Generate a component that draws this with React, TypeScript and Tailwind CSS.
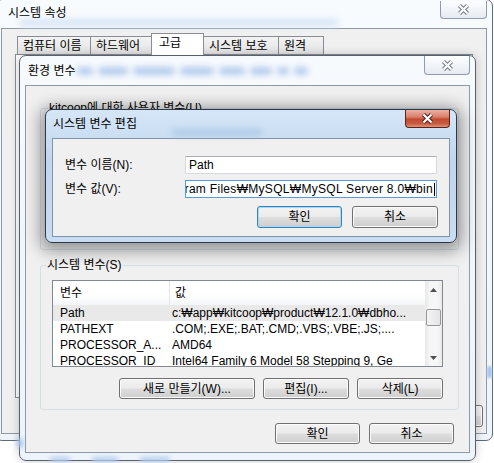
const font = "font-['Liberation_Sans','Noto_Sans_CJK_KR',sans-serif]";

function CloseX({ active }: { active?: boolean }) {
  return (
    <svg width="13" height="11" viewBox="0 0 13 11">
      <path d="M2.5 1.5L10.5 9.5M10.5 1.5L2.5 9.5" stroke={active ? "#47231c" : "#6f7886"} strokeWidth="4.2" />
      <path d="M2.5 1.5L10.5 9.5M10.5 1.5L2.5 9.5" stroke="#ffffff" strokeWidth="2.2" />
    </svg>
  );
}

function Btn({ label, w, isDefault }: { label: string; w: string; isDefault?: boolean }) {
  return (
    <div
      className={`${w} h-full flex items-center justify-center rounded-[3px] border ${
        isDefault
          ? "border-[#3c7fb1] shadow-[inset_0_0_0_1px_#9fdcfb]"
          : "border-[#707070] shadow-[inset_0_0_0_1px_#fbfbfb]"
      } bg-[linear-gradient(180deg,#f2f2f2_0%,#ebebeb_48%,#dddddd_52%,#cfcfcf_100%)]`}
    >
      {label}
    </div>
  );
}

function Arrow({ up }: { up?: boolean }) {
  return (
    <svg width="7" height="4" viewBox="0 0 7 4">
      <path d={up ? "M0 4L3.5 0L7 4Z" : "M0 0L3.5 4L7 0Z"} fill="#4f4f4f" />
    </svg>
  );
}

function BackWindow() {
  const tabs = [
    { label: "컴퓨터 이름", w: "w-[74px]" },
    { label: "하드웨어", w: "w-[62px]" },
    { label: "고급", w: "w-[53px]", active: true },
    { label: "시스템 보호", w: "w-[76px]" },
    { label: "원격", w: "w-[46px]" },
  ];
  return (
    <div className="absolute left-[-5px] top-[-1px] w-[498px] h-[442px] rounded-[7px] border border-[#5f6b78] bg-[linear-gradient(180deg,#f8fbfe,#eef4fa)] flex flex-col px-[5px] pb-[6px]">
      <div className="relative h-[28px] pl-[7px] pt-[6px]">
        <div className="absolute left-[18px] top-[19px] w-[320px] h-[7px] rounded-full bg-[#d6e5f6] blur-[3px]" />
        <span className="relative">시스템 속성</span>
        <div className="absolute right-0 top-[1px] w-[47px] h-[18px] flex items-center justify-center rounded-b-[4px] border border-t-0 border-[#8f9bab] bg-[linear-gradient(180deg,#fdfeff,#e6ebf1)]">
          <CloseX />
        </div>
      </div>
      <div className="flex-1 flex flex-col border border-[#8d99a6] bg-[#f0f0f0] pl-[13px] pt-[4px]">
        <div className="flex items-end h-[22px] pl-[2px]">
          {tabs.map((t) =>
            t.active ? (
              <div
                key={t.label}
                className={`${t.w} relative z-10 -ml-px h-[22px] border border-b-0 border-[#898c95] bg-white pl-[7px] pt-[2px]`}
              >
                {t.label}
              </div>
            ) : (
              <div
                key={t.label}
                className={`${t.w} -ml-px first:ml-0 h-[19px] border border-[#898c95] bg-[linear-gradient(180deg,#f3f3f3,#e3e3e3)] pl-[5px] pt-[2px]`}
              >
                {t.label}
              </div>
            )
          )}
        </div>
        <div className="-mt-px w-[458px] h-[344px] border border-[#898c95] bg-white" />
        <div className="flex justify-end gap-[6px] pr-[3px] mt-[7px] h-[22px]">
          <Btn label="확인" w="w-[75px]" />
          <Btn label="취소" w="w-[75px]" />
          <Btn label="적용(A)" w="w-[75px]" />
        </div>
      </div>
      <div className="absolute right-[0px] top-[366px] w-[5px] h-[12px] rounded-full bg-[#a8c6ec] blur-[1px]" />
    </div>
  );
}

function EnvWindow() {
  const blobs = ["w-[16px]", "w-[30px]", "w-[42px]", "w-[34px]", "w-[26px]", "w-[22px]", "w-[12px]", "w-[14px]"];
  const rows = [
    { name: "Path", value: "c:₩app₩kitcoop₩product₩12.1.0₩dbho...", sel: true },
    { name: "PATHEXT", value: ".COM;.EXE;.BAT;.CMD;.VBS;.VBE;.JS;...." },
    { name: "PROCESSOR_A...", value: "AMD64" },
    { name: "PROCESSOR_ID", value: "Intel64 Family 6 Model 58 Stepping 9, Ge" },
  ];
  return (
    <div className="absolute left-[19px] top-[55px] w-[457px] h-[406px] rounded-[7px] border border-[#58626e] bg-[linear-gradient(180deg,#f7fafd,#edf3fa)] flex flex-col px-[5px] pb-[7px] shadow-[0_0_10px_rgba(0,0,0,0.22)]">
      <div className="relative h-[29px] pl-[3px] pt-[8px]">
        <div className="absolute left-[52px] top-[11px] flex gap-[5px]">
          {blobs.map((b, i) => (
            <div key={i} className={`${b} h-[8px] rounded-full bg-[#b3cbee] blur-[3px]`} />
          ))}
        </div>
        <span className="relative">환경 변수</span>
        <div className="absolute right-0 top-0 w-[46px] h-[19px] flex items-center justify-center rounded-b-[4px] border border-t-0 border-[#8f9bab] bg-[linear-gradient(180deg,#fdfeff,#e6ebf1)]">
          <CloseX />
        </div>
      </div>
      <div className="flex-1 flex flex-col border border-[#8e9aa8] bg-[#f0f0f0] px-[14px] pt-[15px]">
        <fieldset className="w-[419px] h-[149px] rounded-[3px] border border-[#d5dfe5]">
          <legend className="ml-[7px] px-px">kitcoop에 대한 사용자 변수(U)</legend>
        </fieldset>
        <fieldset className="mt-[8px] w-[419px] rounded-[3px] border border-[#d5dfe5] pb-[10px]">
          <legend className="ml-[5px] px-px">시스템 변수(S)</legend>
          <div className="pl-[11px] pt-[8px]">
            <div className="flex w-[391px] h-[87px] border border-[#828790] bg-white">
              <div className="flex-1 flex flex-col overflow-hidden">
                <div className="flex h-[24px] shrink-0 bg-[linear-gradient(180deg,#ffffff_0%,#ffffff_55%,#f4f5f7_100%)]">
                  <div className="w-[117px] flex items-center pl-[7px] border-r border-[#e3e5e8]">변수</div>
                  <div className="flex items-center pl-[5px]">값</div>
                </div>
                {rows.map((r) => (
                  <div
                    key={r.name}
                    className={`flex h-[16px] shrink-0 items-center whitespace-nowrap ${r.sel ? "bg-[#e9e9e9]" : ""}`}
                  >
                    <div className="w-[117px] shrink-0 pl-[7px]">{r.name}</div>
                    <div className="pl-[2px]">{r.value}</div>
                  </div>
                ))}
              </div>
              <div className="w-[17px] flex flex-col bg-[linear-gradient(90deg,#e8e8e8,#f6f6f6_30%,#f6f6f6_70%,#ebebeb)]">
                <div className="h-[17px] flex items-center justify-center">
                  <Arrow up />
                </div>
                <div className="flex-1">
                  <div className="mt-[11px] mx-px h-[17px] rounded-[2px] border border-[#979797] bg-[linear-gradient(90deg,#f4f4f4,#e4e4e4)]" />
                </div>
                <div className="h-[17px] flex items-center justify-center">
                  <Arrow />
                </div>
              </div>
            </div>
            <div className="mt-[11px] flex justify-end gap-[8px] w-[391px] h-[21px]">
              <Btn label="새로 만들기(W)..." w="w-[136px]" />
              <Btn label="편집(I)..." w="w-[86px]" />
              <Btn label="삭제(L)" w="w-[86px]" />
            </div>
          </div>
        </fieldset>
        <div className="mt-[13px] flex justify-end gap-[9px] pr-[1px] h-[21px]">
          <Btn label="확인" w="w-[85px]" />
          <Btn label="취소" w="w-[85px]" />
        </div>
      </div>
      <div className="absolute left-[-3px] top-[382px] w-[6px] h-[10px] rounded-full bg-[#a8c6ec] blur-[2px]" />
      <div className="absolute left-[30px] bottom-[-2px] flex gap-[22px]">
        <div className="w-[20px] h-[5px] rounded-full bg-[#b7cff0] blur-[2px]" />
        <div className="w-[26px] h-[5px] rounded-full bg-[#b7cff0] blur-[2px]" />
        <div className="w-[30px] h-[5px] rounded-full bg-[#b7cff0] blur-[2px]" />
      </div>
    </div>
  );
}

function EditDialog() {
  return (
    <div className="absolute left-[45px] top-[109px] w-[412px] h-[134px] rounded-[7px] border border-[#2b3849] bg-[linear-gradient(180deg,#d5e6f7,#c0d6ee_40%,#c9dcf1)] flex flex-col px-[6px] pb-[5px] shadow-[0_3px_16px_5px_rgba(0,0,0,0.38)]">
      <div className="relative h-[28px] pl-[1px] pt-[7px]">
        <div className="absolute left-[120px] top-[20px] w-[90px] h-[5px] rounded-full bg-[#a9c4e4] blur-[3px]" />
        <span className="relative">시스템 변수 편집</span>
        <div className="absolute right-0 top-0 w-[45px] h-[18px] flex items-center justify-center rounded-b-[4px] border border-t-0 border-[#5e2219] bg-[linear-gradient(180deg,#eab2a4_0%,#d9806b_40%,#c24a31_55%,#c85c3f_80%,#dd9478_100%)]">
          <CloseX active />
        </div>
      </div>
      <div className="flex-1 flex flex-col border border-[#7f93ab] bg-[#f0f0f0] pt-[17px] pl-[12px] pr-[12px]">
        <div className="flex items-center h-[18px]">
          <div className="flex-1">변수 이름(N):</div>
          <div className="w-[252px] h-full flex items-center border border-[#d5d8de] border-t-[#abadb3] bg-white pl-[3px]">
            Path
          </div>
        </div>
        <div className="flex items-center h-[18px] mt-[6px]">
          <div className="flex-1">변수 값(V):</div>
          <div className="w-[252px] h-full flex items-center justify-end overflow-hidden whitespace-nowrap border border-[#5b9bd5] bg-white pr-[1px]">
            <span className="tracking-[0.3px]">ram Files₩MySQL₩MySQL Server 8.0₩bin</span>
            <span className="ml-px w-px h-[13px] bg-black shrink-0" />
          </div>
        </div>
        <div className="mt-[8px] flex justify-end gap-[10px] h-[22px] -mr-px">
          <Btn label="확인" w="w-[85px]" isDefault />
          <Btn label="취소" w="w-[86px]" />
        </div>
      </div>
    </div>
  );
}

export default function App() {
  return (
    <div className={`relative w-[494px] h-[463px] overflow-hidden bg-white text-[12px] leading-[14px] text-black ${font}`}>
      <BackWindow />
      <EnvWindow />
      <EditDialog />
    </div>
  );
}
